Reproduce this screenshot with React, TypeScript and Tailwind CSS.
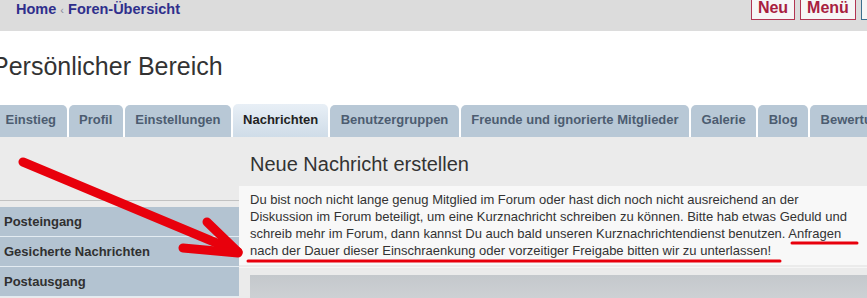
const tabs = [
  "Einstieg",
  "Profil",
  "Einstellungen",
  "Nachrichten",
  "Benutzergruppen",
  "Freunde und ignorierte Mitglieder",
  "Galerie",
  "Blog",
  "Bewertungen",
];

const menu = ["Posteingang", "Gesicherte Nachrichten", "Postausgang"];

export default function App() {
  return (
    <div className="relative w-[867px] h-[298px] overflow-hidden bg-white font-['Liberation_Sans',Arial,sans-serif]">
      {/* top bar */}
      <div className="h-[31px] bg-[#dcdcdc] flex justify-between">
        <div className="pl-[16px] pt-[0px] text-[14.5px] font-bold leading-[18px] text-[#2f2f8c]">
          Home <span className="text-[#8a8a9a] font-normal text-[11px]">‹</span> Foren-Übersicht
        </div>
        <div className="flex gap-[5px] -mt-[4px] h-[24px] -mr-[14px]">
          <div className="border border-[#b23552] bg-[#f6f6f6] w-[44px] text-center text-[16px] font-bold leading-[22px] text-[#a8203f]">Neu</div>
          <div className="border border-[#b23552] bg-[#f6f6f6] w-[56px] text-center text-[16px] font-bold leading-[22px] text-[#a8203f]">Menü</div>
          <div className="border border-[#3b6f8f] bg-[#f6f6f6] w-[20px]"></div>
        </div>
      </div>

      {/* title */}
      <div className="h-[73px] pt-[21px] -ml-[8px]">
        <h1 className="text-[25px] leading-[28px] text-[#333]">Persönlicher Bereich</h1>
      </div>

      {/* tabs */}
      <div className="flex items-end gap-[2px] h-[33px] -ml-[5px] whitespace-nowrap">
        {tabs.map((t) =>
          t === "Nachrichten" ? (
            <div
              key={t}
              className="h-[33px] px-[10px] pt-[8px] rounded-t-[5px] bg-gradient-to-b from-[#e8eff6] to-[#cfdce8] text-[13px] font-bold leading-[16px] text-[#222]"
            >
              {t}
            </div>
          ) : (
            <div
              key={t}
              className="h-[32px] px-[10.5px] pt-[7px] rounded-t-[5px] bg-[#b8c8d6] text-[13px] font-bold leading-[16px] text-[#4c5c70]"
            >
              {t}
            </div>
          )
        )}
      </div>

      {/* content */}
      <div className="flex bg-[#ebebeb] h-[161px]">
        <div className="w-[239px] shrink-0 pt-[63px]">
          <div className="border-t border-[#c2c2c2] pt-[6px]">
            {menu.map((m) => (
              <div
                key={m}
                className="h-[30px] flex items-center pl-[4px] bg-[#b3c3d1] border-b border-[#e4ecf2] text-[13px] font-bold text-[#303030]"
              >
                {m}
              </div>
            ))}
          </div>
        </div>
        <div className="flex-1">
          <h2 className="pl-[11px] pt-[15px] text-[20px] leading-[24px] text-[#333]">Neue Nachricht erstellen</h2>
          <div className="mt-[10px] bg-[#f8f8f8] pl-[11px] pt-[5px] pb-[6px] text-[13px] leading-[17px] text-[#333] whitespace-nowrap">
            Du bist noch nicht lange genug Mitglied im Forum oder hast dich noch nicht ausreichend an der
            <br />
            Diskussion im Forum beteiligt, um eine Kurznachricht schreiben zu können. Bitte hab etwas Geduld und
            <br />
            schreib mehr im Forum, dann kannst Du auch bald unseren Kurznachrichtendienst benutzen. Anfragen
            <br />
            nach der Dauer dieser Einschraenkung oder vorzeitiger Freigabe bitten wir zu unterlassen!
          </div>
          <div className="mt-[2px] h-[1px] bg-[#f6f6f6]"></div>
          <div className="mt-[7px] ml-[11px] h-[30px] bg-gradient-to-b from-[#c4c8cc] to-[#d0d3d6]"></div>
        </div>
      </div>

      {/* red annotations */}
      <svg className="absolute inset-0 pointer-events-none" width="867" height="298" viewBox="0 0 867 298">
        <g stroke="#e8000c" strokeLinecap="round" fill="none">
          <line x1="23" y1="162" x2="238" y2="252" strokeWidth="9" />
          <line x1="207" y1="222" x2="238" y2="252" strokeWidth="9" />
          <line x1="183" y1="248" x2="238" y2="253" strokeWidth="9" />
          <line x1="792" y1="243" x2="857" y2="243" strokeWidth="3" />
          <line x1="248" y1="261" x2="780" y2="261" strokeWidth="3" />
        </g>
      </svg>
    </div>
  );
}
